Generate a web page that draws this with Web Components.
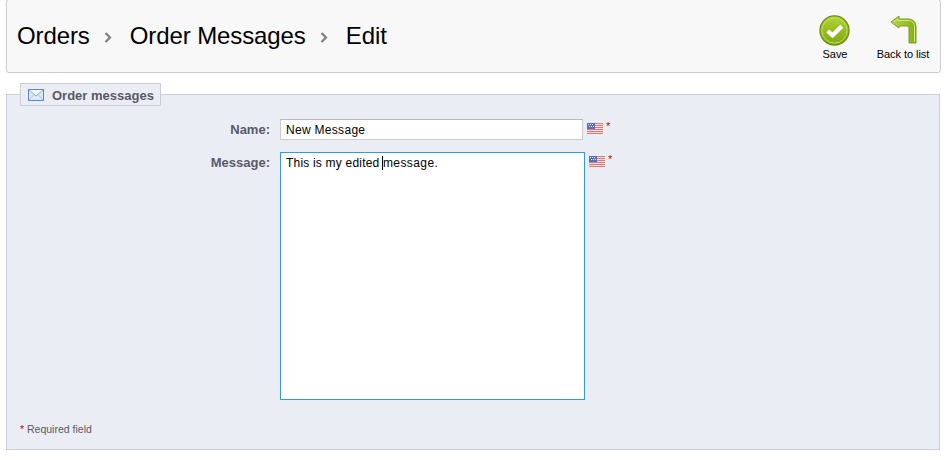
<!DOCTYPE html>
<html>
<head>
<meta charset="utf-8">
<title>Order messages</title>
<style>
  html, body { margin: 0; background: #fff; }
  body { padding: 0 7px 0 6px; font-family: "Liberation Sans", Arial, sans-serif; height: 460px; box-sizing: border-box; overflow: hidden; }
</style>
</head>
<body>
<page-toolbar>
  <bread-crumb slot="crumbs">
    <span>Orders</span><span>Order Messages</span><span>Edit</span>
  </bread-crumb>
  <tool-button slot="actions" icon="save" label="Save"></tool-button>
  <tool-button slot="actions" icon="back" label="Back to list"></tool-button>
</page-toolbar>
<form-panel heading="Order messages">
  <form-row label="Name:">
    <text-field value="New Message"></text-field>
  </form-row>
  <form-row label="Message:">
    <message-box before="This is my edited " after="message."></message-box>
  </form-row>
</form-panel>

<script>
  class PageToolbar extends HTMLElement {
    constructor() {
      super();
      this.attachShadow({ mode: 'open' });
      this.shadowRoot.innerHTML = `
        <style>
          :host {
            display: flex;
            justify-content: space-between;
            align-items: flex-start;
            box-sizing: border-box;
            height: 74px;
            margin-top: -1px;
            background: #f8f8f8;
            border: 1px solid #ccc;
            border-radius: 3px;
            padding: 0 3px 0 10px;
          }
          .actions { display: flex; gap: 0; padding-top: 15px; }
        </style>
        <slot name="crumbs"></slot>
        <div class="actions"><slot name="actions"></slot></div>
      `;
    }
  }

  class BreadCrumb extends HTMLElement {
    constructor() {
      super();
      this.attachShadow({ mode: 'open' });
      this.shadowRoot.innerHTML = `
        <style>
          :host {
            display: block;
            padding-top: 22px;
            font-size: 24px;
            line-height: 28px;
            letter-spacing: -.1px;
            color: #000;
            white-space: nowrap;
          }
          .row { display: flex; align-items: center; }
          svg { margin: 2px 18px 0 14px; display: block; }
        </style>
        <div class="row"></div>
      `;
    }

    connectedCallback() {
      const row = this.shadowRoot.querySelector('.row');
      const parts = [...this.querySelectorAll('span')].map(s => s.textContent);
      row.innerHTML = parts.map(p => `<span>${p}</span>`).join(`
        <svg width="8" height="11" viewBox="0 0 8 11"><path d="M1.5 1 L6 5.5 L1.5 10" fill="none" stroke="#808080" stroke-width="2.2"/></svg>
      `);
    }
  }

  const TOOL_ICONS = {
    save: `
      <svg width="31" height="31" viewBox="0 0 32 32" style="margin-right:1px">
        <defs>
          <linearGradient id="g" x1="0" y1="0" x2="0" y2="1">
            <stop offset="0" stop-color="#b2d336"/>
            <stop offset="1" stop-color="#7ea70f"/>
          </linearGradient>
        </defs>
        <circle cx="16" cy="16" r="15" fill="url(#g)" stroke="#6c8f12" stroke-width="1.3"/>
        <circle cx="16" cy="16" r="13" fill="none" stroke="#c4e05a" stroke-width="1"/>
        <path d="M9 16.5 L14 21 L23.5 11.5" fill="none" stroke="#fff" stroke-width="4.4"/>
      </svg>`,
    back: `
      <svg width="27" height="29" viewBox="0 0 27 29">
        <defs>
          <linearGradient id="h" x1="0" y1="0" x2="1" y2="0">
            <stop offset="0" stop-color="#b9d94a"/>
            <stop offset="1" stop-color="#84ad12"/>
          </linearGradient>
        </defs>
        <path d="M1 7 L9 1 V4 H18 C23 4 26 7 26 12 V28 H19 V13 C19 12 18 11 16.5 11 H9 V13 Z" fill="url(#h)" stroke="#7d9e1a" stroke-width="1" stroke-linejoin="round"/>
        <path d="M3.5 7 L8 4 V5.5 H18 C22 5.5 24.5 8 24.5 12 V27" fill="none" stroke="#d4e98a" stroke-width="1"/>
      </svg>`
  };

  class ToolButton extends HTMLElement {
    constructor() {
      super();
      this.attachShadow({ mode: 'open' });
    }

    connectedCallback() {
      const icon = this.getAttribute('icon');
      const label = this.getAttribute('label');
      this.shadowRoot.innerHTML = `
        <style>
          :host {
            display: block;
            width: 68px;
            text-align: center;
            font-size: 11px;
            color: #000;
          }
          .icon { height: 32px; display: flex; justify-content: center; }
          .label { line-height: 14px; white-space: nowrap; letter-spacing: -.05px; }
        </style>
        <div class="icon">${TOOL_ICONS[icon]}</div>
        <div class="label">${label}</div>
      `;
    }
  }

  class FormPanel extends HTMLElement {
    constructor() {
      super();
      this.attachShadow({ mode: 'open' });
    }

    connectedCallback() {
      this.shadowRoot.innerHTML = `
        <style>
          :host { display: block; margin: 10px 1px 0 0; }
          fieldset {
            margin: 0;
            box-sizing: border-box;
            height: 367px;
            padding: 13px 0 0;
            background: #ebedf4;
            border: 1px solid #ccced7;
          }
          legend {
            margin-left: 13px;
            padding: 1px 6px 0 7px;
            box-sizing: border-box;
            height: 23px;
            display: flex;
            align-items: center;
            gap: 8px;
            background: #ebedf4;
            border: 1px solid #ccced7;
            color: #585a69;
            font-size: 13px;
            font-weight: bold;
          }
          .rows { display: flex; flex-direction: column; gap: 12px; }
          .note {
            margin: 22px 0 0 13px;
            font-size: 10.5px;
            line-height: 14px;
            color: #585a69;
          }
          .note b { color: #c00; font-weight: normal; }
          svg { display: block; }
        </style>
        <fieldset>
          <legend>
            <svg width="16" height="12" viewBox="0 0 16 12">
              <rect x=".5" y=".5" width="15" height="11" fill="#dfe9f8" stroke="#5c86c6"/>
              <path d="M1 1 L8 7 L15 1" fill="#f2f6fd" stroke="#8aaadb"/>
              <path d="M1 11 L6 5.5 M15 11 L10 5.5" fill="none" stroke="#a9c2e6"/>
            </svg>
            ${this.getAttribute('heading')}
          </legend>
          <div class="rows"><slot></slot></div>
          <div class="note"><b>*</b> Required field</div>
        </fieldset>
      `;
    }
  }

  class FormRow extends HTMLElement {
    constructor() {
      super();
      this.attachShadow({ mode: 'open' });
    }

    connectedCallback() {
      this.shadowRoot.innerHTML = `
        <style>
          :host { display: flex; align-items: flex-start; }
          label {
            box-sizing: border-box;
            width: 273px;
            padding: 3px 10px 0 0;
            text-align: right;
            font-size: 13px;
            line-height: 16px;
            font-weight: bold;
            color: #585a69;
          }
          .side { display: flex; align-items: flex-start; margin: 4px 0 0 4px; }
          .star { color: #c00; font-size: 11px; line-height: 11px; margin-left: 3px; margin-top: -2px; }
          svg { display: block; }
        </style>
        <label>${this.getAttribute('label')}</label>
        <slot></slot>
        <div class="side">
          <svg width="16" height="11" viewBox="0 0 16 11">
            <rect width="16" height="11" fill="#f3dede"/>
            <path d="M0 .5h16M0 2.5h16M0 4.5h16M0 6.5h16M0 8.5h16M0 10.5h16" stroke="#d27a7c" stroke-width="1"/>
            <rect width="8" height="6" fill="#5a6fb5"/>
            <path d="M1 1.5h1M3 1.5h1M5 1.5h1M2 3.5h1M4 3.5h1M6 3.5h1" stroke="#dfe6f5"/>
          </svg>
          <span class="star">*</span>
        </div>
      `;
    }
  }

  class TextField extends HTMLElement {
    constructor() {
      super();
      this.attachShadow({ mode: 'open' });
    }

    connectedCallback() {
      this.shadowRoot.innerHTML = `
        <style>
          :host { display: block; }
          input {
            display: block;
            box-sizing: border-box;
            width: 303px;
            height: 21px;
            margin: 0;
            padding: 0 5px;
            background: #fff;
            border: 1px solid #ccc;
            border-top-color: #bbb;
            outline: none;
            font: 12px "Liberation Sans", Arial, sans-serif;
            letter-spacing: .3px;
            color: #000;
          }
        </style>
        <input value="${this.getAttribute('value')}">
      `;
    }
  }

  class MessageBox extends HTMLElement {
    constructor() {
      super();
      this.attachShadow({ mode: 'open' });
    }

    connectedCallback() {
      this.shadowRoot.innerHTML = `
        <style>
          :host {
            display: block;
            box-sizing: border-box;
            width: 305px;
            height: 248px;
            padding: 3px 5px;
            background: #fff;
            border: 1px solid #3399e0;
            font-size: 12px;
            line-height: 14px;
            letter-spacing: .2px;
            color: #000;
          }
          .text { white-space: pre; }
          .after { letter-spacing: .4px; }
          .caret {
            display: inline-block;
            width: 1px;
            height: 14px;
            margin-left: -1px;
            background: #000;
            vertical-align: top;
          }
        </style>
        <div class="text">${this.getAttribute('before')}<span class="caret"></span><span class="after">${this.getAttribute('after')}</span></div>
      `;
    }
  }

  customElements.define('page-toolbar', PageToolbar);
  customElements.define('bread-crumb', BreadCrumb);
  customElements.define('tool-button', ToolButton);
  customElements.define('form-panel', FormPanel);
  customElements.define('form-row', FormRow);
  customElements.define('text-field', TextField);
  customElements.define('message-box', MessageBox);
</script>
</body>
</html>
